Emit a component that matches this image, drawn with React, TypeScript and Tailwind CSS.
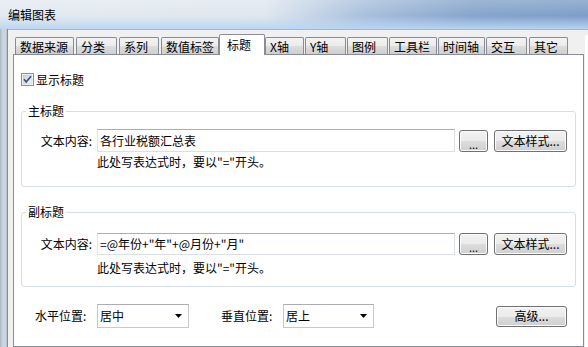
import React from 'react';

const tabs: { label: string; cls: string; selected?: boolean }[] = [
  { label: '数据来源', cls: 'ml-[2px] w-[59px]' },
  { label: '分类', cls: 'ml-[2px] w-[41px]' },
  { label: '系列', cls: 'ml-[2px] w-[40px]' },
  { label: '数值标签', cls: 'ml-[2px] w-[58px]' },
  { label: '标题', cls: 'w-[46px]', selected: true },
  { label: 'X轴', cls: 'w-[39px]' },
  { label: 'Y轴', cls: 'ml-[1px] w-[41px]' },
  { label: '图例', cls: 'ml-[1px] w-[41px]' },
  { label: '工具栏', cls: 'ml-[1px] w-[48px]' },
  { label: '时间轴', cls: 'ml-[1px] w-[47px]' },
  { label: '交互', cls: 'ml-[1px] w-[41px]' },
  { label: '其它', cls: 'ml-[2px] w-[39px]' },
];

function Tab({ label, cls, selected }: { label: string; cls: string; selected?: boolean }) {
  if (selected) {
    return (
      <div
        className={`${cls} h-[21px] -mb-px shrink-0 border border-b-0 border-[#898c95] bg-white pl-[7px] pt-[4px] leading-[12px] rounded-t-[2px]`}
      >
        {label}
      </div>
    );
  }
  return (
    <div
      className={`${cls} h-[17px] shrink-0 border border-b-0 border-[#898c95] bg-[linear-gradient(to_bottom,#f3f3f3_0%,#ebebeb_50%,#dddddd_51%,#cfcfcf_100%)] pl-[4px] pt-[3px] leading-[12px] rounded-t-[2px]`}
    >
      {label}
    </div>
  );
}

function WinButton({ cls, children }: { cls: string; children: React.ReactNode }) {
  return (
    <div
      className={`${cls} shrink-0 rounded-[3px] border border-[#707070] bg-[linear-gradient(to_bottom,#f2f2f2_0%,#ebebeb_50%,#dddddd_51%,#cfcfcf_100%)] shadow-[inset_0_0_0_1px_#fcfcfc] flex items-center justify-center leading-[12px]`}
    >
      {children}
    </div>
  );
}

function Triangle() {
  return (
    <svg width="7" height="4" viewBox="0 0 7 4" className="shrink-0">
      <polygon points="0,0 7,0 3.5,4" fill="#000" />
    </svg>
  );
}

function Select({ cls, value }: { cls: string; value: string }) {
  return (
    <div
      className={`${cls} h-[24px] shrink-0 border border-[#c5c8cf] border-t-[#abadb3] bg-white flex items-center pl-[2px] pr-[6px] leading-[12px]`}
    >
      <span className="flex-1">{value}</span>
      <Triangle />
    </div>
  );
}

function CheckBox() {
  return (
    <svg width="13" height="13" viewBox="0 0 13 13" className="shrink-0">
      <defs>
        <linearGradient id="cbg" x1="0" y1="0" x2="1" y2="1">
          <stop offset="0" stopColor="#cbcfd5" />
          <stop offset="1" stopColor="#f7f7f7" />
        </linearGradient>
      </defs>
      <rect x="0.5" y="0.5" width="12" height="12" fill="#fff" stroke="#8e8f8f" />
      <rect x="2" y="2" width="9" height="9" fill="url(#cbg)" stroke="#b9bec6" strokeWidth="0.5" />
      <path d="M3 6.2 L5.2 9 L10 3.2" fill="none" stroke="#3c4f87" strokeWidth="1.7" />
    </svg>
  );
}

function Group({
  title,
  value,
  fsCls,
  rowCls,
  hintCls,
}: {
  title: string;
  value: string;
  fsCls: string;
  rowCls: string;
  hintCls: string;
}) {
  return (
    <fieldset className={`${fsCls} mx-[7px] rounded-[3px] border border-[#d5dfe5] px-0`}>
      <legend className="ml-[4px] px-[2px] leading-[12px]">{title}</legend>
      <div className={`${rowCls} flex items-center`}>
        <div className="w-[75px] shrink-0 pr-[5px] text-right leading-[12px]">文本内容:</div>
        <div className="w-[358px] h-full shrink-0 border border-[#dbdfe6] border-t-[#abadb3] border-l-[#e2e3ea] bg-white flex items-center pl-[2px] leading-[12px]">
          {value}
        </div>
        <WinButton cls="ml-[4px] w-[29px] h-[22px]">
          <span className="pt-[6px] text-[11px]">...</span>
        </WinButton>
        <WinButton cls="ml-[6px] w-[73px] h-[22px]">文本样式...</WinButton>
      </div>
      <div className={`${hintCls} ml-[75px] leading-[12px]`}>此处写表达式时，要以"="开头。</div>
    </fieldset>
  );
}

export default function App() {
  return (
    <div className="w-[588px] h-[347px] overflow-hidden flex flex-col text-[12px] text-black font-['Noto_Sans_CJK_SC','Liberation_Sans',sans-serif]">
      <div className="h-[29px] shrink-0 bg-[linear-gradient(to_bottom,rgba(255,255,255,0.2)_0%,rgba(190,215,240,0)_55%,rgba(186,214,242,0.95)_100%),linear-gradient(to_right,#e3eaf1_0%,#dfe7ef_45%,#a9c0dc_62%,#86a5cc_80%,#7d9ec8_100%)] pl-[8px] pt-[9px] leading-[12px]">
        编辑图表
      </div>
      <div className="flex flex-1 min-h-0">
        <div className="w-[8px] shrink-0 border-r border-[#7e8c9c] bg-[linear-gradient(to_right,#aab5c1_0%,#cbd6e1_40%,#c6d2de_80%,#b5c1cd_100%)]" />
        <div className="flex-1 flex bg-[#f0f0f0] border-t border-[#aab8c6]">
          <div className="w-[571px] shrink-0 ml-[5px] pt-[4px] flex flex-col">
            <div className="h-[20px] shrink-0 flex items-end relative z-10">
              {tabs.map((t) => (
                <Tab key={t.label} {...t} />
              ))}
            </div>
            <div className="flex-1 border border-[#898c95] bg-white pt-[18px]">
              <div className="flex items-center ml-[7px] h-[13px]">
                <CheckBox />
                <span className="ml-[2px] leading-[12px]">显示标题</span>
              </div>
              <Group
                title="主标题"
                value="各行业税额汇总表"
                fsCls="mt-[19px] pb-[18px]"
                rowCls="pt-[12px] h-[35px]"
                hintCls="mt-[4px]"
              />
              <Group
                title="副标题"
                value={'=@年份+"年"+@月份+"月"'}
                fsCls="mt-[19px] pb-[12px]"
                rowCls="pt-[15px] h-[37px]"
                hintCls="mt-[7px]"
              />
              <div className="mt-[17px] h-[24px] flex items-center pl-[21px] pr-[16px]">
                <div className="w-[62px] shrink-0 leading-[12px]">水平位置:</div>
                <Select cls="w-[92px]" value="居中" />
                <div className="ml-[32px] w-[62px] shrink-0 leading-[12px]">垂直位置:</div>
                <Select cls="w-[91px]" value="居上" />
                <WinButton cls="ml-auto w-[71px] h-[21px]">高级...</WinButton>
              </div>
            </div>
          </div>
          <div className="w-[1px] shrink-0" />
          <div className="w-[3px] shrink-0 mt-[5px] bg-white" />
        </div>
      </div>
    </div>
  );
}
